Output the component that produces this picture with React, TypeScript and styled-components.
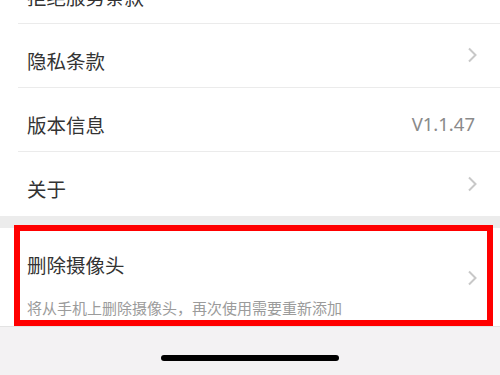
import React from 'react';
import styled, { createGlobalStyle } from 'styled-components';

const GlobalStyle = createGlobalStyle`
  html, body {
    margin: 0;
    padding: 0;
    background: #f3f2f3;
    font-family: "Noto Sans CJK SC", "Noto Sans", sans-serif;
    overflow: hidden;
  }
`;

const Page = styled.div`
  width: 500px;
  height: 375px;
  display: flex;
  flex-direction: column;
  overflow: hidden;
`;

const Group = styled.div`
  background: #fff;
  margin-top: -40px;
`;

const Row = styled.div<{ $last?: boolean }>`
  position: relative;
  height: 64px;
  display: flex;
  align-items: center;
  justify-content: space-between;
  padding: 0 22px 0 27px;
  box-sizing: border-box;

  &::after {
    content: '';
    display: ${(p) => (p.$last ? 'none' : 'block')};
    position: absolute;
    left: 18px;
    right: 0;
    bottom: 0;
    height: 1px;
    background: #ebebeb;
  }
`;

const Label = styled.span`
  font-size: 19.5px;
  color: #333;
  padding-top: 8px;
`;

const Value = styled.span`
  font-size: 18.5px;
  color: #8a8a8a;
  margin-right: 3px;
  font-family: "Noto Sans", "Noto Sans CJK SC", sans-serif;
  padding-top: 6px;
`;

const Band = styled.div`
  height: 12px;
  background: #ececec;
`;

const Card = styled.div`
  position: relative;
  background: #fff;
  height: 99px;
  display: flex;
  align-items: center;
  justify-content: space-between;
  padding: 0 22px 0 27px;
  box-sizing: border-box;
  border-bottom: 1px solid #e3e3e3;
`;

const CardText = styled.div`
  align-self: flex-start;
  display: flex;
  flex-direction: column;
  gap: 18px;
  padding-top: 23px;
`;

const CardTitle = styled.span`
  font-size: 19.5px;
  line-height: 28px;
  color: #333;
`;

const Hint = styled.span`
  font-size: 15px;
  line-height: 22px;
  color: #9b9b9b;
`;

const Highlight = styled.div`
  position: absolute;
  left: 14px;
  top: -3px;
  width: 479px;
  height: 101px;
  border: 6px solid #ff0000;
  box-sizing: border-box;
  pointer-events: none;
`;

const Bottom = styled.div`
  flex: 1;
  display: flex;
  justify-content: center;
  padding-top: 28px;
`;

const HomeBar = styled.div`
  width: 178px;
  height: 6px;
  border-radius: 3px;
  background: #000;
`;

const Chevron = ({ offset = 0 }: { offset?: number }) => (
  <svg width="11" height="16" viewBox="0 0 11 16" style={{ marginTop: offset }}>
    <polyline points="2,1.5 8.5,8 2,14.5" fill="none" stroke="#c8c8c8" strokeWidth="2" />
  </svg>
);

export default function App() {
  return (
    <Page>
      <GlobalStyle />
      <Group>
        <Row>
          <Label>拒绝服务条款</Label>
          <Chevron />
        </Row>
        <Row>
          <Label>隐私条款</Label>
          <Chevron offset={-2} />
        </Row>
        <Row>
          <Label>版本信息</Label>
          <Value>V1.1.47</Value>
        </Row>
        <Row $last>
          <Label>关于</Label>
          <Chevron offset={0} />
        </Row>
      </Group>
      <Band />
      <Card>
        <CardText>
          <CardTitle>删除摄像头</CardTitle>
          <Hint>将从手机上删除摄像头，再次使用需要重新添加</Hint>
        </CardText>
        <Chevron offset={2} />
        <Highlight />
      </Card>
      <Bottom>
        <HomeBar />
      </Bottom>
    </Page>
  );
}
